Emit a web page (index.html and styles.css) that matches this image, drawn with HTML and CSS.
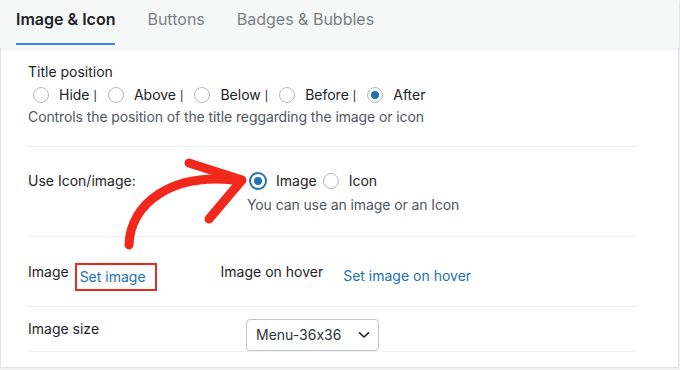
FILE: index.html
```html
<!DOCTYPE html>
<html lang="en">
<head>
    <meta charset="UTF-8">
    <meta name="viewport" content="width=device-width, initial-scale=1.0">
    <title>Menu Image Settings</title>
    <link rel="stylesheet" href="styles.css">
</head>
<body>

    <div class="panel">
        <nav class="tabs">
            <a class="tab active"><span>Image &amp; Icon</span></a>
            <a class="tab"><span>Buttons</span></a>
            <a class="tab"><span>Badges &amp; Bubbles</span></a>
        </nav>

        <div class="settings">
            <!-- Title position -->
            <div class="row stacked">
                <div class="label">Title position</div>
                <div class="options">
                    <label class="opt"><input type="radio" name="title" class="radio">Hide <i class="pipe">|</i></label>
                    <label class="opt"><input type="radio" name="title" class="radio">Above <i class="pipe">|</i></label>
                    <label class="opt"><input type="radio" name="title" class="radio">Below <i class="pipe">|</i></label>
                    <label class="opt"><input type="radio" name="title" class="radio">Before <i class="pipe">|</i></label>
                    <label class="opt"><input type="radio" name="title" class="radio" checked>After</label>
                </div>
                <p class="desc">Controls the position of the title reggarding the image or icon</p>
            </div>

            <!-- Icon or image -->
            <div class="row split">
                <div class="label col">Use Icon/image:</div>
                <div class="field">
                    <div class="options tight">
                        <label class="opt"><input type="radio" name="type" class="radio focus" checked>Image</label>
                        <label class="opt"><input type="radio" name="type" class="radio">Icon</label>
                    </div>
                    <p class="desc">You can use an image or an Icon</p>
                </div>
            </div>

            <!-- Images -->
            <div class="row media">
                <span class="label">Image</span>
                <a class="link boxed" href="#">Set image</a>
                <span class="label hover-label">Image on hover</span>
                <a class="link hover-link" href="#">Set image on hover</a>
            </div>

            <!-- Size -->
            <div class="row split size">
                <div class="label col">Image size</div>
                <div class="select">
                    <span>Menu-36x36</span>
                    <svg width="12" height="8" viewBox="0 0 12 8"><path d="M1.5 1.8 L6 6 L10.5 1.8" fill="none" stroke="#1d2327" stroke-width="1.6" stroke-linecap="round" stroke-linejoin="round"/></svg>
                </div>
            </div>
        </div>

        <!-- hand drawn pointer -->
        <svg class="arrow" width="680" height="370" viewBox="0 0 680 370">
            <path d="M128 245 C129 204, 170 171, 240 181" fill="none" stroke="#f1291c" stroke-width="9" stroke-linecap="round"/>
            <path d="M188 163 L241 180 L208 219" fill="none" stroke="#f1291c" stroke-width="9" stroke-linecap="round" stroke-linejoin="round"/>
        </svg>
    </div>

</body>
</html>
```

FILE: styles.css
```css
/* General Styles */
body {
    margin: 0;
    font-family: 'Inter', 'Roboto', sans-serif;
    font-size: 14px;
    line-height: 20px;
    font-feature-settings: "calt" 0;
    color: #1d2327;
    background: #f0f0f1;
}
.panel {
    position: relative;
    width: 677px;
    background: #fff;
    border: 1px solid #e2e4e7;
    border-top: none;
    padding-bottom: 15px;
}

/* Tabs */
.tabs {
    display: flex;
    height: 48px;
    margin-left: -1px;
    margin-right: -1px;
    background: #f6f7f7;
    box-shadow: 0 1px 4px rgba(0, 0, 0, 0.09);
}
.tab {
    padding: 9px 16px 0;
    font-size: 16px;
    color: #7b7f84;
    cursor: pointer;
}
.tab span {
    display: block;
    padding-bottom: 14px;
    border-bottom: 2px solid transparent;
}
.tab.active {
    color: #1d2327;
    font-weight: 600;
}
.tab.active span {
    border-bottom-color: #3b86e8;
}

/* Rows */
.settings {
    width: 608px;
    margin-left: 27px;
}
.row {
    border-bottom: 1px solid #f0f0f1;
}
.stacked {
    padding: 14px 0 19px;
}
.split {
    display: flex;
    padding: 24px 0 21px;
}
.col {
    width: 218px;
    flex-shrink: 0;
}
.media {
    display: flex;
    align-items: flex-start;
    padding: 25px 0 15px;
}
.size {
    padding: 12px 0 0;
}

/* Radios */
.options {
    display: flex;
    gap: 11px;
    margin-top: 3px;
    padding-left: 5px;
}
.options.tight {
    gap: 6px;
    margin-top: 0;
    padding-left: 4px;
}
.opt {
    display: inline-flex;
    align-items: center;
    gap: 10px;
    cursor: pointer;
}
.pipe {
    font-style: normal;
    font-family: 'Liberation Sans', sans-serif;
    font-size: 13px;
    margin-left: -6px;
    color: #3c434a;
}
.radio {
    appearance: none;
    margin: 0;
    width: 16px;
    height: 16px;
    border: 1px solid #b4b7ba;
    border-radius: 50%;
    background: #fff;
    position: relative;
}
.radio:checked::before {
    content: "";
    position: absolute;
    top: 3px;
    left: 3px;
    width: 8px;
    height: 8px;
    border-radius: 50%;
    background: #2271b1;
}
.radio.focus {
    border-color: #2271b1;
    box-shadow: 0 0 0 1px #2271b1;
}
.desc {
    margin: 2px 0 0;
    color: #50575e;
    letter-spacing: -0.1px;
}
.field .desc {
    margin-top: 4px;
    margin-left: 1px;
}

/* Links */
.link {
    color: #2271b1;
    text-decoration: none;
    margin-top: 4px;
}
.boxed {
    margin: 1px 0 0 6px;
    padding: 2px 9px 2px 3px;
    border: 2px solid #e8291c;
}
.hover-label {
    margin-left: 64px;
}
.hover-link {
    margin-left: 20px;
}

/* Select */
.select {
    display: flex;
    align-items: center;
    justify-content: space-between;
    box-sizing: border-box;
    width: 133px;
    height: 32px;
    padding: 0 8px 0 9px;
    border: 1px solid #c3c4c7;
    border-radius: 4px;
    color: #2c3338;
}

/* Arrow overlay */
.arrow {
    position: absolute;
    top: 0;
    left: 0;
    pointer-events: none;
}
```
